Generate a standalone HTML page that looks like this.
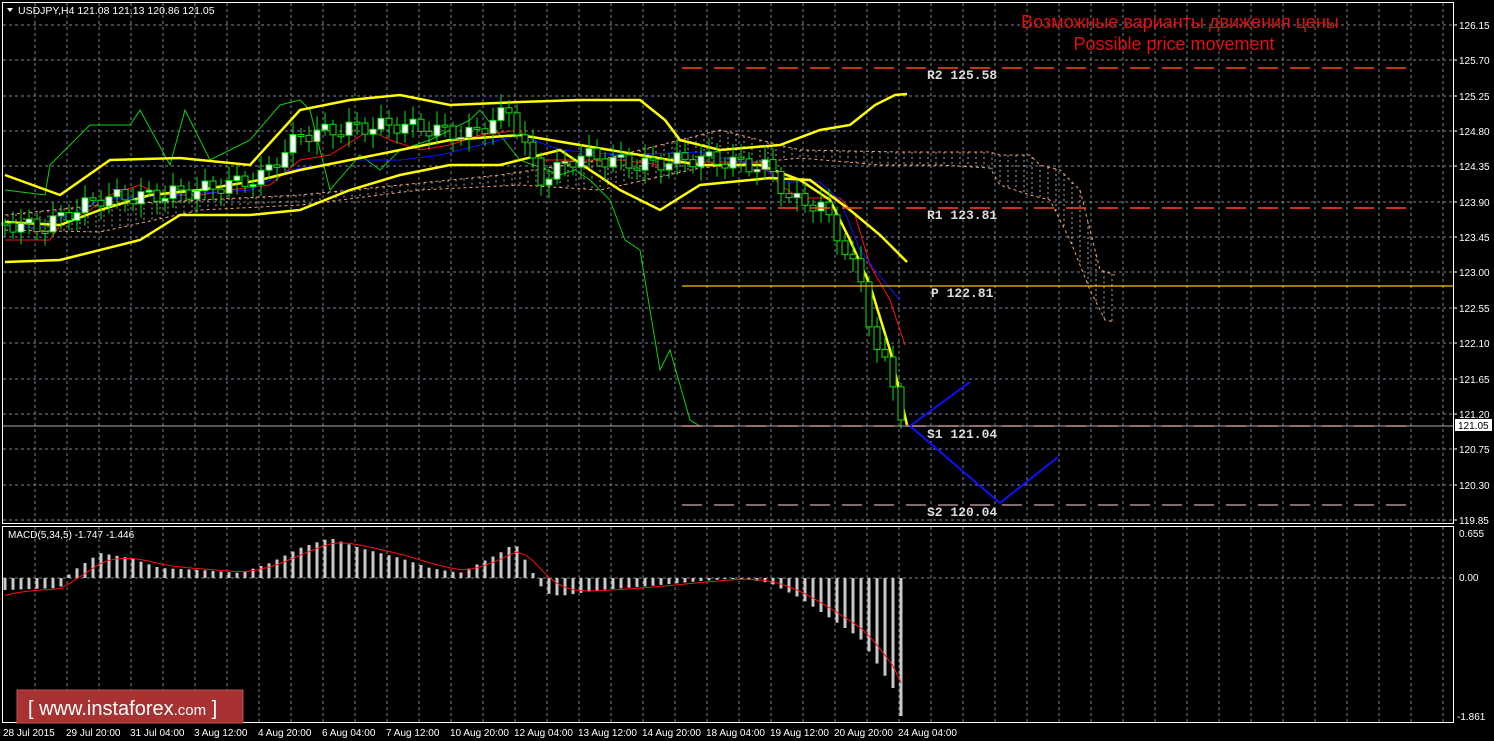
<!DOCTYPE html>
<html><head><meta charset="utf-8">
<style>
html,body{margin:0;padding:0;background:#000;width:1494px;height:741px;overflow:hidden}
svg{display:block}
text{font-family:"Liberation Sans",sans-serif}
.ax{fill:#fff;font-size:10px}
.lv{fill:#ddd;font-family:"Liberation Mono",monospace;font-size:13px;font-weight:bold}
</style></head><body>
<svg id="s" width="1494" height="741" xmlns="http://www.w3.org/2000/svg">
<rect width="1494" height="741" fill="#000"/>
<g id="grid"></g>
<g id="cloud"></g>
<g id="lines"></g>
<g id="candles"></g>
<g id="macd"></g>
<rect x="2.5" y="2.5" width="1451" height="521" fill="none" stroke="#fff" stroke-width="1"/>
<rect x="2.5" y="526.5" width="1451" height="196" fill="none" stroke="#fff" stroke-width="1"/>
<line x1="682" y1="68" x2="1418" y2="68" stroke="#ff4a10" stroke-width="1.5" stroke-dasharray="20,12"/>
<line x1="682" y1="208" x2="1418" y2="208" stroke="#ff4a10" stroke-width="1.5" stroke-dasharray="20,12"/>
<line x1="682" y1="286" x2="1453" y2="286" stroke="#ffc000" stroke-width="1.2"/>
<line x1="3" y1="426" x2="1453" y2="426" stroke="#aaa" stroke-width="1"/>
<line x1="682" y1="426" x2="1418" y2="426" stroke="#d09090" stroke-width="1.5" stroke-dasharray="20,12"/>
<line x1="682" y1="505" x2="1418" y2="505" stroke="#b09090" stroke-width="1.5" stroke-dasharray="20,12"/>
<text class="lv" x="927" y="79">R2 125.58</text>
<text class="lv" x="927" y="219">R1 123.81</text>
<text class="lv" x="931" y="297">P 122.81</text>
<text class="lv" x="927" y="438">S1 121.04</text>
<text class="lv" x="927" y="516">S2 120.04</text>
<polyline points="910,426 970,382" fill="none" stroke="#1010ff" stroke-width="2"/>
<polyline points="910,426 1000,503 1058,457" fill="none" stroke="#1010ff" stroke-width="2"/>
<text x="1180" y="28" fill="#e01010" font-size="18" text-anchor="middle">Возможные варианты движения цены</text>
<text x="1174" y="50" fill="#e01010" font-size="18" text-anchor="middle">Possible price movement</text>
<path d="M7 8 L13 8 L10 12 Z" fill="#fff"/>
<text x="18" y="14" fill="#fff" font-size="10.5">USDJPY,H4  121.08 121.13 120.86 121.05</text>
<text x="8" y="538" fill="#fff" font-size="10">MACD(5,34,5) -1.747 -1.446</text>
<g id="yax" class="ax"></g>
<rect x="1455" y="419" width="37" height="12" fill="#fff"/>
<text x="1458" y="429" font-size="10" fill="#000">121.05</text>
<text class="ax" x="1459" y="537">0.655</text>
<text class="ax" x="1459" y="581">0.00</text>
<text class="ax" x="1457" y="720">-1.861</text>
<g class="ax">
<text x="3" y="736">28 Jul 2015</text><text x="66" y="736">29 Jul 20:00</text><text x="130" y="736">31 Jul 04:00</text><text x="194" y="736">3 Aug 12:00</text><text x="258" y="736">4 Aug 20:00</text><text x="322" y="736">6 Aug 04:00</text><text x="386" y="736">7 Aug 12:00</text><text x="450" y="736">10 Aug 20:00</text><text x="514" y="736">12 Aug 04:00</text><text x="578" y="736">13 Aug 12:00</text><text x="642" y="736">14 Aug 20:00</text><text x="706" y="736">18 Aug 04:00</text><text x="770" y="736">19 Aug 12:00</text><text x="834" y="736">20 Aug 20:00</text><text x="898" y="736">24 Aug 04:00</text>
</g>
<rect x="17" y="690" width="226" height="33" fill="#a83232" stroke="#c05050"/>
<text x="28" y="715" fill="#fff" font-size="20">[  www.instaforex<tspan font-size="15">.com</tspan>  ]</text>
</svg>
<script>
(function(){
var NS="http://www.w3.org/2000/svg";
function el(p,t,a){var e=document.createElementNS(NS,t);for(var k in a)e.setAttribute(k,a[k]);document.getElementById(p).appendChild(e);return e;}
function pl(p,pts,c,w,extra){var a={points:pts.map(function(q){return q.join(",")}).join(" "),fill:"none",stroke:c,"stroke-width":w};for(var k in extra)a[k]=extra[k];el(p,"polyline",a);}
for(var x=35;x<1450;x+=32){el("grid","line",{x1:x,y1:3,x2:x,y2:523,stroke:"#7a8494","stroke-dasharray":"3,3"});el("grid","line",{x1:x,y1:527,x2:x,y2:722,stroke:"#7a8494","stroke-dasharray":"3,3"});}
var labs=["126.15","125.70","125.25","124.80","124.35","123.90","123.45","123.00","122.55","122.10","121.65","121.20","120.75","120.30","119.85"];
for(var i=0;i<15;i++){var y=Math.round(25+i*35.35);el("grid","line",{x1:3,y1:y,x2:1453,y2:y,stroke:"#7a8494","stroke-dasharray":"3,3"});var t=el("yax","text",{x:1459,y:y+4});t.textContent=labs[i];el("yax","line",{x1:1453,y1:y,x2:1457,y2:y,stroke:"#fff"});}
el("grid","line",{x1:3,y1:578,x2:1453,y2:578,stroke:"#7a8494","stroke-dasharray":"3,3"});
function interp(pts,x){for(var i=1;i<pts.length;i++){if(x<=pts[i][0]){var a=pts[i-1],b=pts[i];return a[1]+(b[1]-a[1])*(x-a[0])/(b[0]-a[0]);}}return pts[pts.length-1][1];}
var A=[[5,215],[100,205],[200,200],[300,195],[400,185],[500,175],[600,160],[680,140],[720,130],[760,140],[800,150],[900,152],[990,152],[1000,155],[1030,155],[1040,165],[1060,170],[1080,190],[1100,270],[1115,275]];
var B=[[5,230],[100,232],[200,210],[300,205],[420,190],[520,185],[600,190],[700,168],[800,158],[880,165],[940,165],[990,168],[1000,185],[1030,195],[1050,200],[1070,240],[1090,290],[1105,320],[1115,322]];
pl("cloud",A,"#f0a070",1,{"stroke-dasharray":"3,3"});pl("cloud",B,"#f0a070",1,{"stroke-dasharray":"3,3"});
for(var x=8;x<1115;x+=8){var y1=interp(A,x),y2=interp(B,x);el("cloud","line",{x1:x,y1:Math.min(y1,y2),x2:x,y2:Math.max(y1,y2),stroke:"#d8d0c8","stroke-width":0.8,"stroke-dasharray":"2,3"});}
pl("lines",[[5,190],[45,195],[50,165],[90,125],[130,125],[140,110],[170,165],[185,110],[210,160],[250,140],[280,105],[300,100],[310,110],[330,190],[360,155],[380,170],[400,150],[430,140],[470,120],[480,110],[520,160],[560,175],[575,170],[590,180],[610,200],[625,240],[640,250],[660,370],[670,350],[690,420],[700,426]],"#10d010",1);
pl("lines",[[5,240],[50,240],[60,225],[90,210],[110,195],[140,185],[160,195],[200,195],[230,190],[270,185],[300,160],[330,155],[370,130],[390,140],[420,150],[450,145],[480,135],[520,130],[540,160],[580,160],[620,160],[660,165],[700,162],[760,162],[780,185],[800,198],[840,198],[855,215],[870,265],[890,300],[905,345]],"#ff1010",1);
pl("lines",[[5,225],[40,228],[80,210],[100,200],[170,195],[250,190],[290,170],[350,160],[400,160],[440,155],[500,140],[520,135],[560,150],[620,155],[700,152],[730,160],[760,165],[780,182],[820,182],[840,200],[860,250],[875,270],[900,300]],"#1010ff",1);
var BU=[[5,175],[60,195],[110,160],[180,158],[250,165],[300,110],[350,100],[400,95],[450,105],[520,102],[580,100],[640,100],[665,120],[680,140],[720,150],[780,145],[820,130],[850,125],[875,105],[895,95],[907,94]];
var BL=[[5,262],[60,260],[140,240],[180,215],[250,215],[300,210],[350,190],[400,175],[450,165],[500,165],[560,150],[620,190],[660,210],[700,185],[770,178],[810,180],[850,210],[880,235],[907,262]];
var BM=[[5,222],[60,225],[100,210],[150,195],[200,190],[260,180],[300,170],[350,160],[400,150],[450,140],[520,135],[580,145],[640,155],[700,165],[760,165],[800,180],[830,200],[850,240],[870,285],[890,350],[907,425]];
pl("lines",BU,"#ffff00",2.5);pl("lines",BL,"#ffff00",2.5);pl("lines",BM,"#ffff00",2.5);
var C=[[5,223],[40,228],[100,198],[150,196],[200,190],[260,178],[300,135],[350,128],[400,125],[470,135],[510,110],[520,135],[540,180],[580,155],[640,165],[700,158],[770,168],[790,200],[820,205],[840,240],[860,280],[875,345],[890,375],[905,426]];
var prev=interp(C,5);
for(var i=0;i<113;i++){var x=5+i*8;if(x>906)break;var c=interp(C,x)+Math.sin(i*1.7)*8;var o=prev;prev=c;var hi=Math.min(o,c)-4-Math.abs(Math.sin(i*2.3))*10,lo=Math.max(o,c)+4+Math.abs(Math.cos(i*1.3))*10;
el("candles","line",{x1:x,y1:hi,x2:x,y2:lo,stroke:"#10e010"});var bt=Math.min(o,c),h=Math.max(2,Math.abs(o-c));
el("candles","rect",{x:x-3,y:bt,width:6,height:h,fill:c<o?"#fff":"#000",stroke:"#10e010"});}
var M=[[5,-12],[60,-10],[70,5],[100,25],[130,20],[160,10],[200,8],[240,5],[270,15],[300,30],[330,40],[360,30],[400,20],[430,10],[460,5],[500,25],[515,35],[530,10],[545,-15],[560,-18],[600,-12],[650,-8],[700,-3],[740,0],[770,-5],[800,-20],[830,-40],[860,-60],[880,-90],[893,-110],[901,-138]];
var sig=[],s=-20;
for(var x=5;x<=907;x+=8){var v=interp(M,x);el("macd","rect",{x:x-1.5,y:v>0?578-v:578,width:3,height:Math.max(1,Math.abs(v)),fill:"#c8c8c8"});s=s+(v-s)*0.33;sig.push([x,578-s]);}
pl("macd",sig,"#ff1010",1);
})();
</script>
</body></html>
